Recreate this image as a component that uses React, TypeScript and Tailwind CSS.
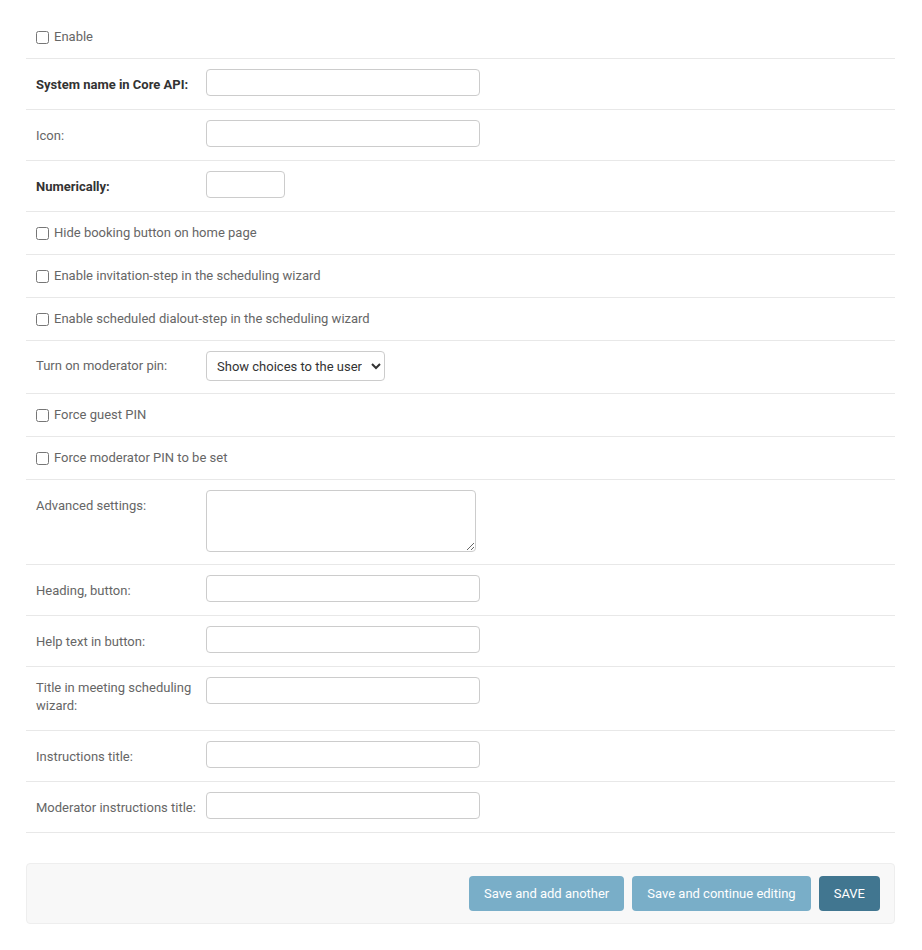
import type { ReactNode } from "react";

const font = { fontFamily: "Roboto, 'Liberation Sans', sans-serif" };

function CheckRow({ label }: { label: string }) {
  return (
    <div className="border-b border-[#e8e8e8] p-[10px]">
      <div className="flex h-[22px] items-center">
        <input type="checkbox" className="mr-[5px] h-[13px] w-[13px]" />
        <label className="text-[13px] text-[#666]">{label}</label>
      </div>
    </div>
  );
}

interface FieldProps {
  label: string;
  required?: boolean;
  children: ReactNode;
  labelClass?: string;
  bodyClass?: string;
}

function FieldRow({ label, required, children, labelClass = "pt-[7px]", bodyClass = "pb-[3px]" }: FieldProps) {
  return (
    <div className="border-b border-[#e8e8e8] p-[10px]">
      <div className="flex items-start">
        <label
          className={`w-[170px] shrink-0 pr-[10px] text-[13px] leading-[18px] ${labelClass} ${
            required ? "font-bold text-[#333]" : "text-[#666]"
          }`}
        >
          {label}
        </label>
        <div className={bodyClass}>{children}</div>
      </div>
    </div>
  );
}

function TextInput({ width = "w-[274px]" }: { width?: string }) {
  return (
    <input
      type="text"
      className={`${width} block h-[27px] rounded-[4px] border border-[#ccc] bg-white px-[6px] text-[13px] text-[#333] outline-none`}
    />
  );
}

export default function App() {
  return (
    <div className="min-h-[950px] bg-white pb-[27px] pl-[26px] pr-[27px] pt-4" style={font}>
      <CheckRow label="Enable" />
      <FieldRow label="System name in Core API:" required>
        <TextInput />
      </FieldRow>
      <FieldRow label="Icon:">
        <TextInput />
      </FieldRow>
      <FieldRow label="Numerically:" required>
        <TextInput width="w-[79px]" />
      </FieldRow>
      <CheckRow label="Hide booking button on home page" />
      <CheckRow label="Enable invitation-step in the scheduling wizard" />
      <CheckRow label="Enable scheduled dialout-step in the scheduling wizard" />
      <FieldRow label="Turn on moderator pin:" labelClass="pt-[6px]" bodyClass="pb-[2px]">
        <select className="block h-[30px] w-[179px] rounded-[4px] border border-[#ccc] bg-white px-[6px] text-[13px] text-[#333] outline-none">
          <option>Show choices to the user</option>
        </select>
      </FieldRow>
      <CheckRow label="Force guest PIN" />
      <CheckRow label="Force moderator PIN to be set" />
      <FieldRow label="Advanced settings:" labelClass="pt-[7px]" bodyClass="pb-[2px]">
        <textarea className="block h-[62px] w-[270px] rounded-[4px] border border-[#ccc] bg-white px-[6px] py-[5px] text-[13px] text-[#333] outline-none" />
      </FieldRow>
      <FieldRow label="Heading, button:">
        <TextInput />
      </FieldRow>
      <FieldRow label="Help text in button:">
        <TextInput />
      </FieldRow>
      <FieldRow label="Title in meeting scheduling wizard:" labelClass="pt-[2px] pb-[5px]">
        <TextInput />
      </FieldRow>
      <FieldRow label="Instructions title:">
        <TextInput />
      </FieldRow>
      <FieldRow label="Moderator instructions title:">
        <TextInput />
      </FieldRow>

      <div className="mt-[30px] flex justify-end gap-2 rounded-[4px] border border-[#eee] bg-[#f8f8f8] px-[14px] py-3">
        <button className="h-[35px] rounded-[4px] bg-[#79aec8] px-[15px] text-[13px] text-white">
          Save and add another
        </button>
        <button className="h-[35px] rounded-[4px] bg-[#79aec8] px-[15px] text-[13px] text-white">
          Save and continue editing
        </button>
        <button className="h-[35px] rounded-[4px] bg-[#417690] px-[15px] text-[13px] text-white">
          SAVE
        </button>
      </div>
    </div>
  );
}
